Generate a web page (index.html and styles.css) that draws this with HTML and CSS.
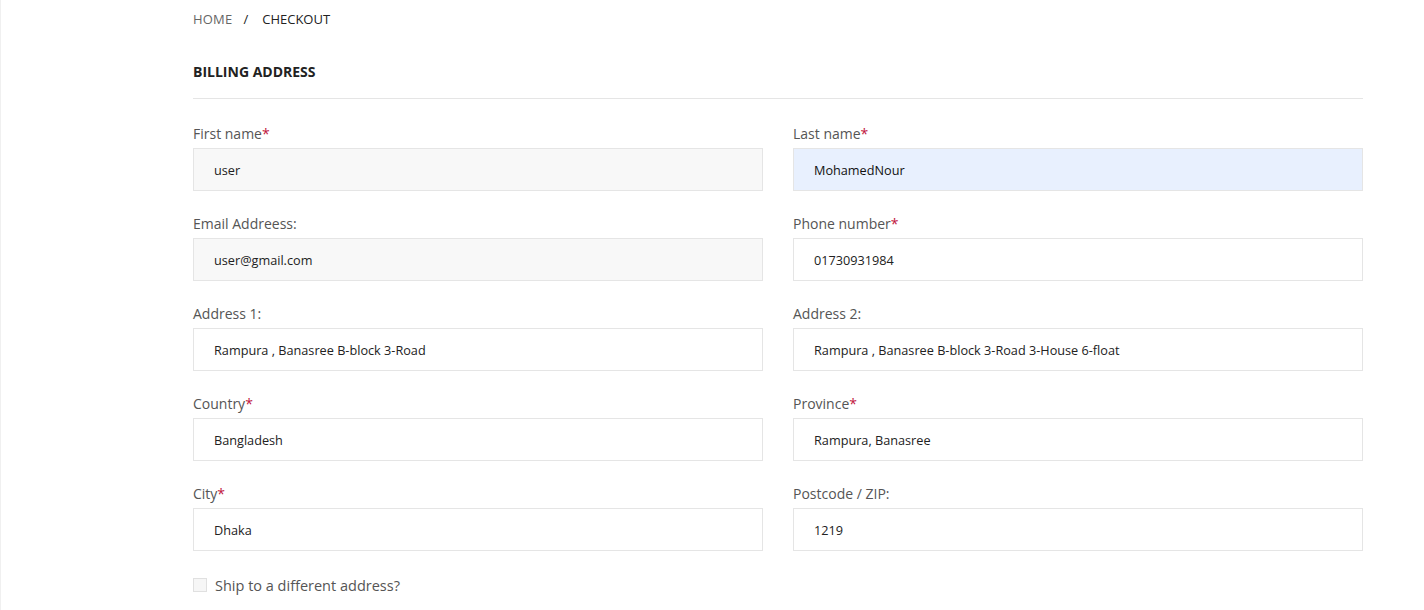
FILE: index.html
```html
<!DOCTYPE html>
<html>
<head>
<meta charset="utf-8">
<link rel="stylesheet" href="styles.css">
</head>
<body>
<div class="page">
  <nav class="breadcrumb"><span class="crumb">HOME</span><span class="sep">/</span><span class="crumb current">CHECKOUT</span></nav>
  <h3 class="section-title">BILLING ADDRESS</h3>
  <form class="billing">
    <div class="grid">
      <div class="field">
        <label class="label">First name<span class="req">*</span></label>
        <input class="input readonly" type="text" value="user" readonly>
      </div>
      <div class="field">
        <label class="label">Last name<span class="req">*</span></label>
        <input class="input autofill" type="text" value="MohamedNour">
      </div>
      <div class="field">
        <label class="label">Email Addreess:</label>
        <input class="input readonly" type="text" value="user@gmail.com" readonly>
      </div>
      <div class="field">
        <label class="label">Phone number<span class="req">*</span></label>
        <input class="input" type="text" value="01730931984">
      </div>
      <div class="field">
        <label class="label">Address 1:</label>
        <input class="input" type="text" value="Rampura , Banasree B-block 3-Road">
      </div>
      <div class="field">
        <label class="label">Address 2:</label>
        <input class="input" type="text" value="Rampura , Banasree B-block 3-Road 3-House 6-float">
      </div>
      <div class="field">
        <label class="label">Country<span class="req">*</span></label>
        <input class="input" type="text" value="Bangladesh">
      </div>
      <div class="field">
        <label class="label">Province<span class="req">*</span></label>
        <input class="input" type="text" value="Rampura, Banasree">
      </div>
      <div class="field">
        <label class="label">City<span class="req">*</span></label>
        <input class="input" type="text" value="Dhaka">
      </div>
      <div class="field">
        <label class="label">Postcode / ZIP:</label>
        <input class="input" type="text" value="1219">
      </div>
    </div>
    <label class="ship"><span class="checkbox"></span><span class="ship-text">Ship to a different address?</span></label>
  </form>
</div>
</body>
</html>
```

FILE: styles.css
```css
* { box-sizing: border-box; }
html, body { margin: 0; padding: 0; background: #fff; }
body {
  font-family: "Open Sans", "Liberation Sans", sans-serif;
  color: #333;
  border-left: 1px solid #f0f0f0;
  min-height: 610px;
}
.page {
  padding: 9px 61px 0 192px;
}
.breadcrumb {
  display: flex;
  align-items: center;
  font-size: 13px;
  line-height: 20px;
  height: 20px;
}
.crumb { color: #666; letter-spacing: 0.2px; }
.crumb.current { color: #222; letter-spacing: 0; }
.sep { color: #222; margin: 0 14px 0 11px; }
.section-title {
  margin: 33px 0 0;
  font-size: 14px;
  font-weight: 700;
  line-height: 20px;
  color: #222;
  padding-bottom: 16px;
  border-bottom: 1px solid #e5e5e5;
}
.billing { padding-top: 24px; }
.grid {
  display: grid;
  grid-template-columns: 1fr 1fr;
  column-gap: 30px;
}
.field {
  display: flex;
  flex-direction: column;
  margin-bottom: 22px;
}
.label {
  font-size: 14px;
  line-height: 20px;
  padding-top: 1px;
  height: 20px;
  color: #555;
  margin-bottom: 5px;
}
.req { color: #c0143c; }
.input {
  height: 43px;
  border: 1px solid #e5e5e5;
  background: #fff;
  padding: 0 20px;
  font-family: "Open Sans", "Liberation Sans", sans-serif;
  font-size: 12.7px;
  color: #222;
  outline: none;
}
.input.readonly { background: #f8f8f8; }
.input.autofill { background: #e8f0fe; color: #111; }
.ship {
  display: flex;
  align-items: center;
  margin-top: 2px;
  height: 20px;
}
.checkbox {
  width: 14px;
  height: 14px;
  border: 1px solid #e0e0e0;
  background: #f6f6f6;
  margin-right: 8px;
}
.ship-text {
  font-size: 14.5px;
  color: #555;
}
```
